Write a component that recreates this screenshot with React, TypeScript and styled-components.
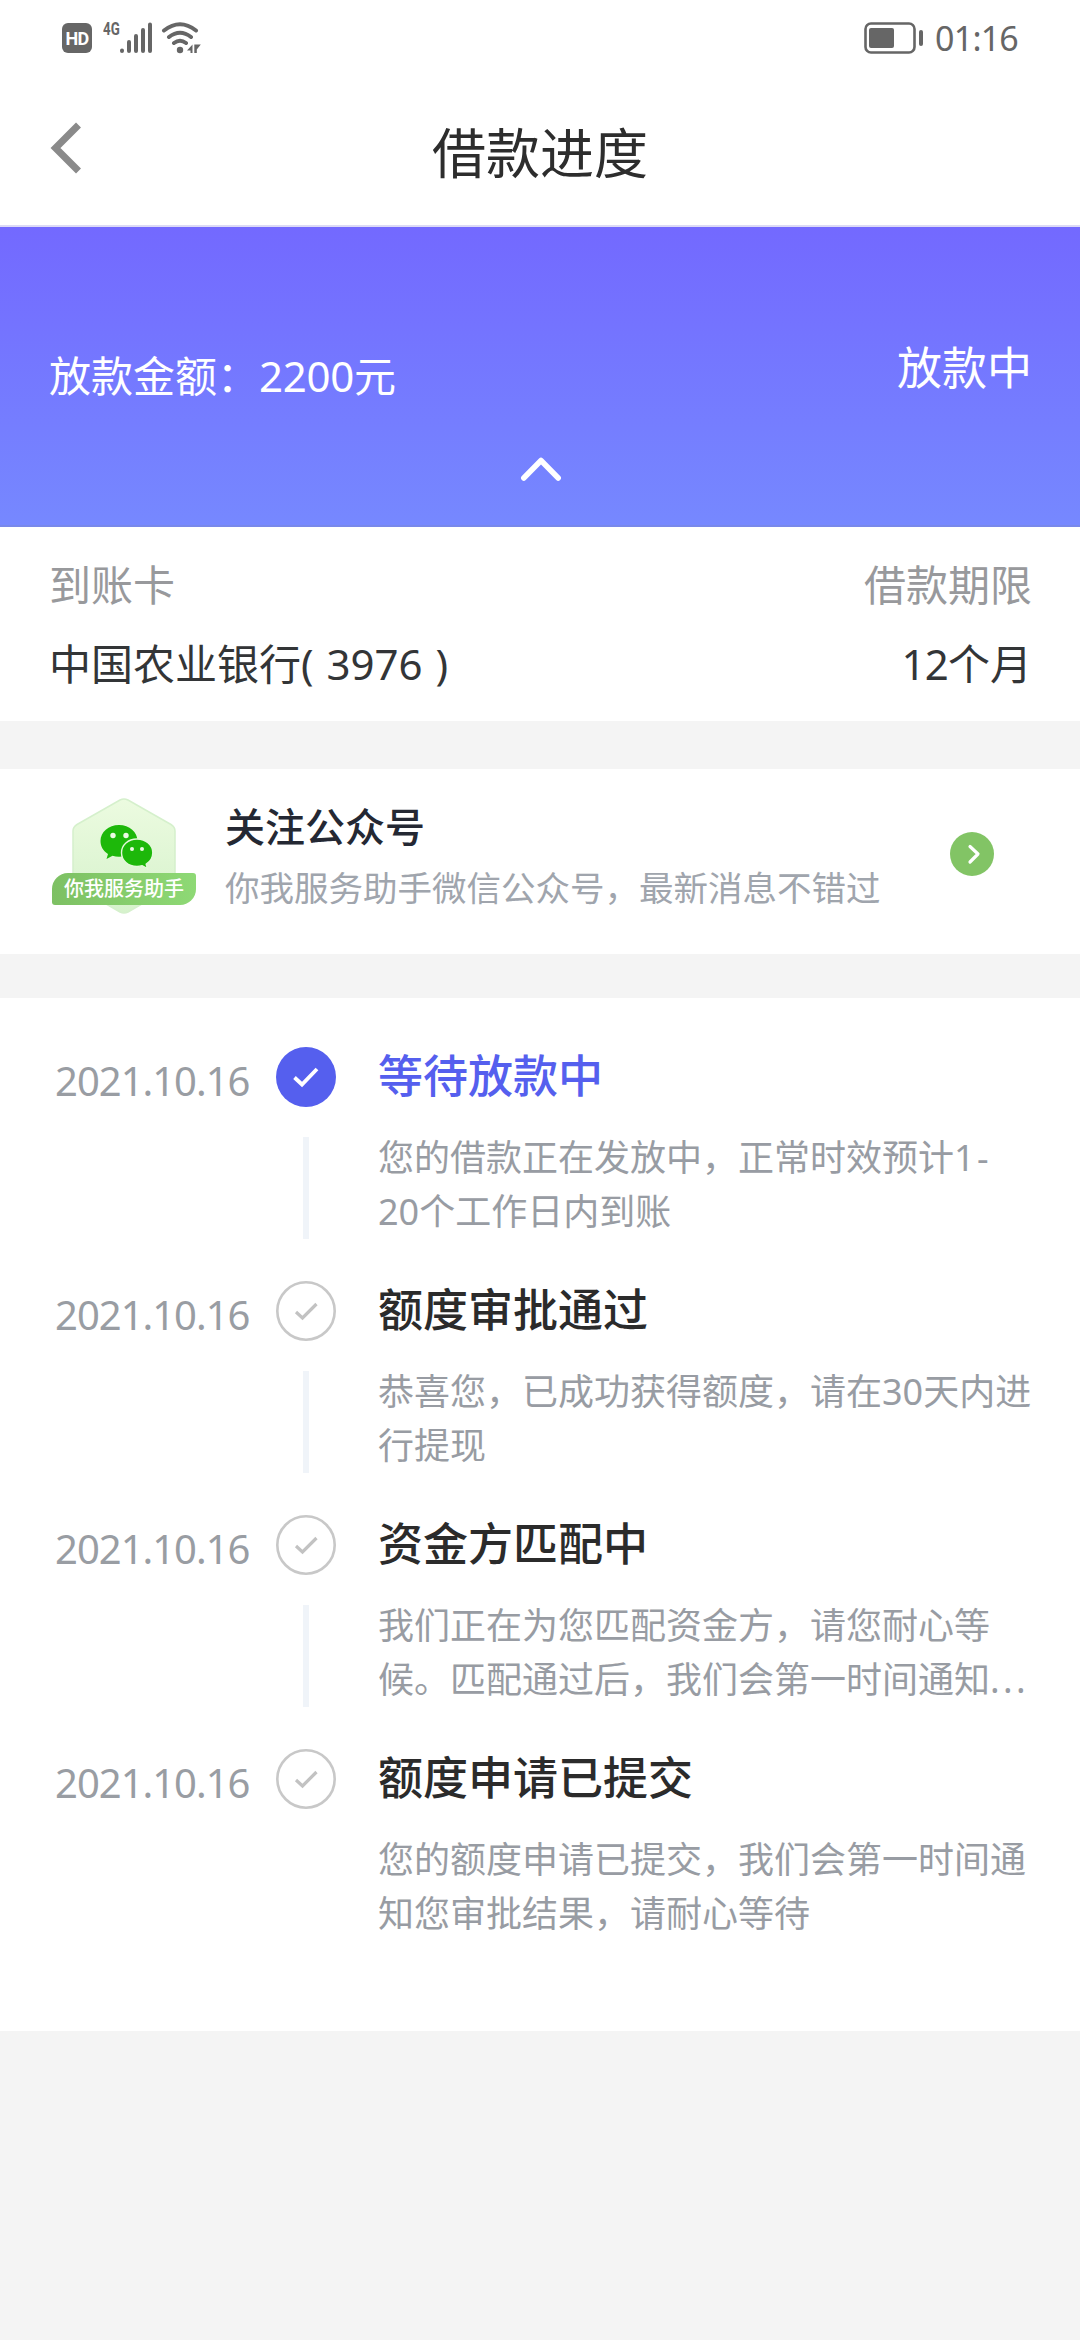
import React from "react";
import styled, { createGlobalStyle } from "styled-components";

const numeric = '"Noto Sans", "Noto Sans CJK SC", sans-serif';
const cjk = '"Noto Sans CJK SC", "Noto Sans", sans-serif';

const GlobalStyle = createGlobalStyle`
  *, *::before, *::after { box-sizing: border-box; }
  body { margin: 0; background: #f4f4f4; font-family: ${cjk}; }
`;

const Screen = styled.div`
  width: 1080px;
  height: 2340px;
  background: #f4f4f4;
  display: flex;
  flex-direction: column;
  overflow: hidden;
  color: #333;
`;

const Num = styled.span<{ $spacing?: number; $word?: number }>`
  font-family: ${numeric};
  line-height: 0;
  letter-spacing: ${(p) => p.$spacing ?? 0}px;
  word-spacing: ${(p) => p.$word ?? 0}px;
`;

const StatusBar = styled.div`
  height: 75px;
  padding: 0 62px;
  background: #fff;
  color: #666;
  display: flex;
  justify-content: space-between;
  align-items: center;
  flex: none;
`;

const StatusGroup = styled.div`
  display: flex;
  align-items: center;
`;

const HdBadge = styled.span`
  width: 30px;
  height: 30px;
  border-radius: 6px;
  background: #666;
  color: #fff;
  font: 700 18px/31px Roboto, sans-serif;
  letter-spacing: -0.8px;
  text-align: center;
`;

const NetworkType = styled.span`
  font: 700 19px/18px Roboto, sans-serif;
  transform: scaleX(0.7);
  transform-origin: left center;
  width: 16px;
  margin: 0 0 17px 11px;
`;

const Clock = styled.span`
  font: 400 34px/40px ${numeric};
  letter-spacing: -0.8px;
  margin: 1px 0 0 11px;
`;

const NavBar = styled.header`
  height: 152px;
  padding: 0 48px 5px;
  background: #fff;
  border-bottom: 2px solid #dcdaf6;
  display: grid;
  grid-template-columns: 100px 1fr 100px;
  align-items: center;
  flex: none;
`;

const Title = styled.h1`
  margin: 6px 0 0;
  font-size: 54px;
  line-height: 80px;
  font-weight: 400;
  text-align: center;
  color: #2d2d2d;
`;

const Banner = styled.section`
  height: 300px;
  padding: 106px 48px 0 49px;
  background: linear-gradient(#7369ff, #7688ff);
  border-bottom: 2px solid #7888ea;
  color: #fff;
  display: flex;
  flex-direction: column;
  align-items: center;
  flex: none;
`;

const BannerRow = styled.div`
  width: 100%;
  display: flex;
  justify-content: space-between;
`;

const Amount = styled.div`
  font-size: 42px;
  line-height: 60px;
  padding-top: 11px;
`;

const LoanState = styled.div`
  font-size: 45px;
  line-height: 66px;
`;

const CollapseIcon = styled.svg`
  margin-top: 52px;
`;

const Details = styled.section`
  height: 194px;
  padding: 26px 48px 0 49px;
  background: #fff;
  display: flex;
  justify-content: space-between;
  flex: none;
`;

const Detail = styled.dl<{ $end?: boolean }>`
  margin: 0;
  font-size: 42px;
  line-height: 60px;
  text-align: ${(p) => (p.$end ? "right" : "left")};
`;

const DetailLabel = styled.dt`
  color: #98999c;
`;

const DetailValue = styled.dd`
  margin: 19px 0 0;
  color: #333537;
`;

const Follow = styled.section`
  height: 185px;
  margin: 48px 0 44px;
  padding: 0 86px 0 48px;
  background: #fff;
  display: flex;
  align-items: center;
  flex: none;
`;

const AccountBadge = styled.div`
  width: 152px;
  height: 120px;
  margin-top: -10px;
  display: grid;
  grid-template-areas: "stack";
  justify-items: center;
`;

const Hexagon = styled.svg`
  grid-area: stack;
`;

const Ribbon = styled.span`
  grid-area: stack;
  width: 144px;
  height: 32px;
  margin-top: 76px;
  border-radius: 16px 3px 16px 3px;
  background: linear-gradient(90deg, #7dc063, #8ed975);
  color: #fff;
  font-size: 20px;
  line-height: 30px;
  font-weight: 500;
  text-align: center;
`;

const FollowText = styled.div`
  flex: 1;
  margin: 0 0 15px 25px;
`;

const FollowTitle = styled.div`
  margin-bottom: 3px;
  font-size: 40px;
  line-height: 60px;
  font-weight: 500;
  color: #242833;
`;

const FollowHint = styled.div`
  font-size: 34.5px;
  line-height: 56px;
  font-weight: 400;
  color: #a0a5ad;
`;

const FollowArrow = styled.svg`
  margin-bottom: 15px;
`;

const Timeline = styled.ol`
  list-style: none;
  margin: 0;
  height: 1033px;
  padding: 49px 40px 0 55px;
  background: #fff;
  flex: none;
`;

const Step = styled.li`
  height: 234px;
  display: grid;
  grid-template-columns: 221px 60px 1fr;
`;

const StepDate = styled.div`
  font: 400 40px/60px ${numeric};
  letter-spacing: -1px;
  padding-top: 4px;
  color: #999da3;
`;

const StepMark = styled.div`
  display: flex;
  flex-direction: column;
  align-items: center;
  gap: 30px;
`;

const Connector = styled.span`
  width: 6px;
  height: 102px;
  background: #f0f4f9;
`;

const StepBody = styled.div`
  padding-left: 42px;
`;

const StepTitle = styled.div<{ $active?: boolean }>`
  margin-top: -3px;
  font-size: 45px;
  line-height: 60px;
  font-weight: 500;
  color: ${(p) => (p.$active ? "#555fee" : "#2b2b2b")};
`;

const StepText = styled.div`
  margin-top: 24px;
`;

const StepLine = styled.div`
  font-size: 36px;
  line-height: 54px;
  white-space: nowrap;
  color: #989ca3;
`;

const WifiGlyph = styled.svg`
  margin-left: 8px;
`;

function SignalIcon() {
  return (
    <svg width="34" height="32" viewBox="0 0 34 32" stroke="#666" strokeWidth="4" strokeLinecap="round">
      <path d="M3 28.5v.5M10 20v9M17 14v15M24 8v21M31 2.500v26.500" />
    </svg>
  );
}

function WifiIcon() {
  return (
    <WifiGlyph width="42" height="32" viewBox="0 0 42 32" fill="none" stroke="#666" strokeWidth="4" strokeLinecap="round">
      <path d="M3 8.500Q19 -4 35 8.500M8 15Q19 6.500 30 15M13 21Q19 16.500 25 21" />
      <circle cx="19" cy="28" r="3.200" fill="#666" stroke="none" />
      <path d="M31.500 22.500V31h-2v-2.500H26zM33.300 22.500h6.500l-4 5V31h-2.500z" fill="#666" stroke="none" />
    </WifiGlyph>
  );
}

function BatteryIcon() {
  return (
    <svg width="60" height="32" viewBox="0 0 60 32">
      <rect x="1.500" y="1.500" width="49" height="29" rx="5.500" fill="none" stroke="#666" strokeWidth="2.600" />
      <rect x="5" y="6" width="25" height="20" rx="2" fill="#666" />
      <rect x="55" y="8" width="4" height="16" rx="2" fill="#666" />
    </svg>
  );
}

function StepIcon({ active }: { active?: boolean }) {
  return active ? (
    <svg width="60" height="60" viewBox="0 0 60 60" fill="none">
      <circle cx="30" cy="30" r="30" fill="#555fee" />
      <path d="M18.500 30.500l7.500 7 15-15.500" stroke="#fff" strokeWidth="3.800" />
    </svg>
  ) : (
    <svg width="60" height="60" viewBox="0 0 60 60" fill="none">
      <circle cx="30" cy="30" r="28.700" stroke="#c8c8c8" strokeWidth="2.600" />
      <path d="M20 31l6.500 6 14-14" stroke="#c2c2c2" strokeWidth="3.200" />
    </svg>
  );
}

const steps = [
  { title: "等待放款中", active: true, lines: ["您的借款正在发放中，正常时效预计1-", "20个工作日内到账"] },
  { title: "额度审批通过", lines: ["恭喜您，已成功获得额度，请在30天内进", "行提现"] },
  { title: "资金方匹配中", lines: ["我们正在为您匹配资金方，请您耐心等", "候。匹配通过后，我们会第一时间通知..."] },
  { title: "额度申请已提交", lines: ["您的额度申请已提交，我们会第一时间通", "知您审批结果，请耐心等待"] },
];

function withNumerals(line: string) {
  return line.split(/([0-9\-]+|\.+)/).map((part, i) => {
    if (i % 2 === 0) return part;
    const spacing = part[0] === "." ? 3.4 : part.includes("-") ? 2.5 : 0;
    return (
      <Num key={i} $spacing={spacing}>
        {part}
      </Num>
    );
  });
}

export default function App() {
  return (
    <>
      <GlobalStyle />
      <Screen lang="zh-CN">
        <StatusBar>
          <StatusGroup>
            <HdBadge>HD</HdBadge>
            <NetworkType>4G</NetworkType>
            <SignalIcon />
            <WifiIcon />
          </StatusGroup>
          <StatusGroup>
            <BatteryIcon />
            <Clock>01:16</Clock>
          </StatusGroup>
        </StatusBar>
        <NavBar>
          <svg width="34" height="54" viewBox="0 0 34 54" fill="none">
            <path d="M30.500 4L7.500 27l23 23" stroke="#8a8a8a" strokeWidth="7" />
          </svg>
          <Title>借款进度</Title>
        </NavBar>
        <Banner>
          <BannerRow>
            <Amount>
              放款金额：<Num $spacing={-0.3}>2200</Num>元
            </Amount>
            <LoanState>放款中</LoanState>
          </BannerRow>
          <CollapseIcon width="44" height="26" viewBox="0 0 44 26" fill="none" stroke="#fff" strokeWidth="5.500" strokeLinecap="round" strokeLinejoin="round">
            <path d="M4.800 22L22 4.500 39.200 22" />
          </CollapseIcon>
        </Banner>
        <Details>
          <Detail>
            <DetailLabel>到账卡</DetailLabel>
            <DetailValue>
              中国农业银行<Num $word={2}>( 3976 )</Num>
            </DetailValue>
          </Detail>
          <Detail $end>
            <DetailLabel>借款期限</DetailLabel>
            <DetailValue>
              <Num $spacing={-0.8}>12</Num>个月
            </DetailValue>
          </Detail>
        </Details>
        <Follow>
          <AccountBadge>
            <Hexagon width="104" height="118" viewBox="0 0 104 118">
              <defs>
                <linearGradient id="hex" x1="0" y1="0" x2="0" y2="1">
                  <stop offset="0" stopColor="#ecfbe0" />
                  <stop offset="1" stopColor="#d6f2cc" />
                </linearGradient>
              </defs>
              <path d="M48 3Q52 1 56 3L99 27.500Q103 30 103 34V83Q103 87 99 90L56 115Q52 117 48 115L5 90Q1 87 1 83V34Q1 30 5 27.500Z" fill="url(#hex)" stroke="#d5f0cc" strokeWidth="1.500" />
              <path d="M47 28c-10.500 0-18.500 7-18.500 16 0 5.500 2.800 10 7.500 13l-1.500 5 6-3.200c2 .6 4.300.9 6.500.9 10.500 0 18.500-7 18.500-15.700S57.500 28 47 28z" fill="#1db80a" />
              <path d="M65 42c-9 0-15.500 6-15.500 13.700S56 69.500 65 69.500c1.800 0 3.600-.3 5.200-.8l5.300 3-1.300-4.500c4-2.600 6.600-6.700 6.600-11.500C80.800 48 74 42 65 42z" fill="#1db80a" stroke="#e4f8da" strokeWidth="1.400" />
              <g fill="#ecfbe4">
                <circle cx="41" cy="38.500" r="2.700" />
                <circle cx="54" cy="38.500" r="2.700" />
                <circle cx="60" cy="52" r="2" />
                <circle cx="70" cy="52" r="2" />
              </g>
            </Hexagon>
            <Ribbon>你我服务助手</Ribbon>
          </AccountBadge>
          <FollowText>
            <FollowTitle>关注公众号</FollowTitle>
            <FollowHint>你我服务助手微信公众号，最新消息不错过</FollowHint>
          </FollowText>
          <FollowArrow width="44" height="44" viewBox="0 0 44 44" fill="none">
            <circle cx="22" cy="22" r="22" fill="#82c465" />
            <path d="M20 14.500L28 22l-8 8" stroke="#fff" strokeWidth="3.200" strokeLinecap="round" strokeLinejoin="round" />
          </FollowArrow>
        </Follow>
        <Timeline>
          {steps.map((step, i) => (
            <Step key={step.title}>
              <StepDate>2021.10.16</StepDate>
              <StepMark>
                <StepIcon active={step.active} />
                {i < steps.length - 1 && <Connector />}
              </StepMark>
              <StepBody>
                <StepTitle $active={step.active}>{step.title}</StepTitle>
                <StepText>
                  {step.lines.map((line) => (
                    <StepLine key={line}>{withNumerals(line)}</StepLine>
                  ))}
                </StepText>
              </StepBody>
            </Step>
          ))}
        </Timeline>
      </Screen>
    </>
  );
}
